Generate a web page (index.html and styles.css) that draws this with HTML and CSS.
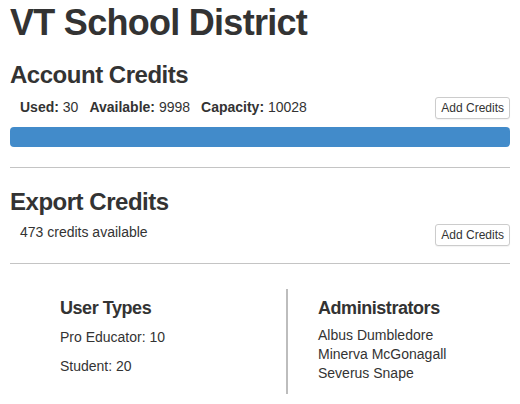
FILE: index.html
```html
<!DOCTYPE html>
<html lang="en">
<head>
<meta charset="utf-8">
<title>VT School District</title>
<link rel="stylesheet" href="styles.css">
</head>
<body>
<div class="page">
  <h1 class="title">VT School District</h1>

  <section class="credits">
    <h3 class="section-title">Account Credits</h3>
    <div class="row">
      <div class="stats">
        <span class="stat"><b>Used:</b> 30</span>
        <span class="stat"><b>Available:</b> 9998</span>
        <span class="stat"><b>Capacity:</b> 10028</span>
      </div>
      <button class="btn" type="button">Add Credits</button>
    </div>
    <div class="progress"><div class="progress-bar" style="width:100%"></div></div>
  </section>

  <hr class="divider divider-first">

  <section class="credits">
    <h3 class="section-title section-title-export">Export Credits</h3>
    <div class="row">
      <div class="stats stats-export">473 credits available</div>
      <button class="btn" type="button">Add Credits</button>
    </div>
  </section>

  <hr class="divider divider-second">

  <div class="columns">
    <div class="col col-left">
      <h4 class="col-title">User Types</h4>
      <p class="type">Pro Educator: 10</p>
      <p class="type">Student: 20</p>
    </div>
    <div class="col col-right">
      <h4 class="col-title">Administrators</h4>
      <ul class="admins">
        <li>Albus Dumbledore</li>
        <li>Minerva McGonagall</li>
        <li>Severus Snape</li>
      </ul>
    </div>
  </div>
</div>
</body>
</html>
```

FILE: styles.css
```css
html, body {
  margin: 0;
  padding: 0;
  background: #fff;
}

body {
  font-family: "Liberation Sans", Arial, Helvetica, sans-serif;
  font-size: 14px;
  line-height: 20px;
  color: #333;
}

.page {
  width: 500px;
  padding: 3px 10px 0 10px;
}

.title {
  margin: 0;
  font-size: 36px;
  line-height: 40px;
  font-weight: bold;
  letter-spacing: -0.02em;
  color: #333;
}

.section-title {
  margin: 19px 0 0 0;
  font-size: 24px;
  line-height: 26px;
  font-weight: bold;
  letter-spacing: -0.02em;
  color: #333;
}

.section-title-export {
  margin-top: 21px;
}

.row {
  display: flex;
  justify-content: space-between;
  align-items: flex-start;
  margin-top: 9px;
}

.stats {
  display: flex;
  gap: 11px;
  padding-left: 10px;
  line-height: 20px;
}

.stats-export {
  margin-top: -2px;
}

.stat b {
  font-weight: bold;
}

.btn {
  font-family: "Liberation Sans", Arial, Helvetica, sans-serif;
  font-size: 12px;
  line-height: 18px;
  padding: 1px 5px;
  margin: 0;
  color: #333;
  background: #fff;
  border: 1px solid #ccc;
  border-radius: 3px;
  box-shadow: 0 1px 1px rgba(0, 0, 0, 0.05);
}

.progress {
  margin-top: 8px;
  height: 20px;
  border-radius: 4px;
  background: #f5f5f5;
  overflow: hidden;
}

.progress-bar {
  height: 100%;
  background: #428bca;
}

.divider {
  margin: 20px 0 0 0;
  border: 0;
  border-top: 1px solid #c4c4c4;
  height: 0;
}

.divider-second {
  margin-top: 17px;
}

.columns {
  display: grid;
  grid-template-columns: 276px 1fr;
  margin-top: 25px;
}

.col-left {
  padding: 9px 0 0 50px;
}

.col-right {
  border-left: 2px solid #bdbdbd;
  padding: 9px 0 11px 30px;
}

.col-title {
  margin: 0;
  font-size: 18px;
  line-height: 20px;
  font-weight: bold;
  letter-spacing: -0.025em;
  color: #333;
}

.type {
  margin: 9px 0 0 0;
  line-height: 20px;
}

.admins {
  list-style: none;
  margin: 8px 0 0 0;
  padding: 0;
  line-height: 19px;
}
```
